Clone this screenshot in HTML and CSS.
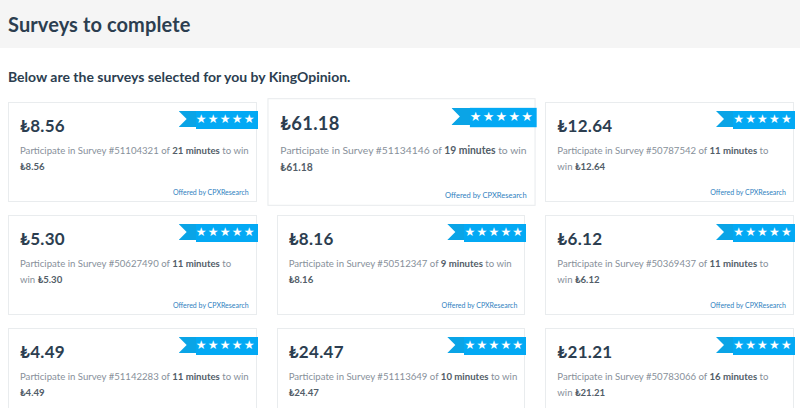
FILE: index.html
```html
<!DOCTYPE html>
<html>
<head>
<meta charset="utf-8">
<link rel="stylesheet" href="styles.css">
</head>
<body>
<header class="topbar"><h1 class="title">Surveys to complete</h1></header>
<main class="content">
  <p class="lead">Below are the surveys selected for you by KingOpinion.</p>
  <div class="grid">
    <div class="card">
      <div class="ribbon"><span class="tail"></span><span class="stars">★★★★★</span></div>
      <div class="price">₺8.56</div>
      <p class="desc">Participate in Survey #51104321 of <b>21 minutes</b> to win <b>₺8.56</b></p>
      <div class="offer">Offered by CPXResearch</div>
    </div>
    <div class="card card--hover">
      <div class="ribbon"><span class="tail"></span><span class="stars">★★★★★</span></div>
      <div class="price">₺61.18</div>
      <p class="desc">Participate in Survey #51134146 of <b>19 minutes</b> to win <b>₺61.18</b></p>
      <div class="offer">Offered by CPXResearch</div>
    </div>
    <div class="card">
      <div class="ribbon"><span class="tail"></span><span class="stars">★★★★★</span></div>
      <div class="price">₺12.64</div>
      <p class="desc">Participate in Survey #50787542 of <b>11 minutes</b> to<br>win <b>₺12.64</b></p>
      <div class="offer">Offered by CPXResearch</div>
    </div>
    <div class="card">
      <div class="ribbon"><span class="tail"></span><span class="stars">★★★★★</span></div>
      <div class="price">₺5.30</div>
      <p class="desc">Participate in Survey #50627490 of <b>11 minutes</b> to<br>win <b>₺5.30</b></p>
      <div class="offer">Offered by CPXResearch</div>
    </div>
    <div class="card">
      <div class="ribbon"><span class="tail"></span><span class="stars">★★★★★</span></div>
      <div class="price">₺8.16</div>
      <p class="desc">Participate in Survey #50512347 of <b>9 minutes</b> to win <b>₺8.16</b></p>
      <div class="offer">Offered by CPXResearch</div>
    </div>
    <div class="card">
      <div class="ribbon"><span class="tail"></span><span class="stars">★★★★★</span></div>
      <div class="price">₺6.12</div>
      <p class="desc">Participate in Survey #50369437 of <b>11 minutes</b> to<br>win <b>₺6.12</b></p>
      <div class="offer">Offered by CPXResearch</div>
    </div>
    <div class="card">
      <div class="ribbon"><span class="tail"></span><span class="stars">★★★★★</span></div>
      <div class="price">₺4.49</div>
      <p class="desc">Participate in Survey #51142283 of <b>11 minutes</b> to win <b>₺4.49</b></p>
      <div class="offer">Offered by CPXResearch</div>
    </div>
    <div class="card">
      <div class="ribbon"><span class="tail"></span><span class="stars">★★★★★</span></div>
      <div class="price">₺24.47</div>
      <p class="desc">Participate in Survey #51113649 of <b>10 minutes</b> to win <b>₺24.47</b></p>
      <div class="offer">Offered by CPXResearch</div>
    </div>
    <div class="card">
      <div class="ribbon"><span class="tail"></span><span class="stars">★★★★★</span></div>
      <div class="price">₺21.21</div>
      <p class="desc">Participate in Survey #50783066 of <b>16 minutes</b> to<br>win <b>₺21.21</b></p>
      <div class="offer">Offered by CPXResearch</div>
    </div>
  </div>
</main>
</body>
</html>
```

FILE: styles.css
```css
html, body {
  margin: 0;
  padding: 0;
  background: #ffffff;
  font-family: Lato, "Liberation Sans", sans-serif;
  color: #2a3a48;
  overflow: hidden;
}
.topbar {
  background: #f5f5f5;
  height: 48px;
  padding: 0 8px;
  display: flex;
  align-items: center;
}
.title {
  margin: 0;
  font-size: 20px;
  font-weight: 700;
  color: #2c3e50;
  letter-spacing: 0.1px;
}
.content {
  padding: 0 6px 0 8px;
}
.lead {
  margin: 0;
  padding-top: 19px;
  height: 35px;
  box-sizing: border-box;
  font-size: 14px;
  font-weight: 700;
  line-height: 20px;
  color: #2c3e50;
}
.grid {
  margin-top: 19px;
  display: grid;
  grid-template-columns: repeat(3, 1fr);
  column-gap: 20px;
  row-gap: 13px;
}
.card {
  position: relative;
  height: 100px;
  box-sizing: border-box;
  border: 1px solid #e9ecee;
  background: #fff;
  padding: 11px 5px 0 11px;
  display: flex;
  flex-direction: column;
}
.card--hover {
  transform: scale(1.077);
  z-index: 2;
}
.ribbon {
  position: absolute;
  top: 8px;
  right: -2px;
  width: 79px;
  height: 18px;
  display: flex;
  align-items: center;
  justify-content: flex-end;
}
.ribbon .tail {
  position: absolute;
  left: 0;
  top: 0;
  width: 20px;
  height: 16px;
  background: #0aa4e6;
  clip-path: polygon(0 0, 100% 0, 100% 100%, 0 100%, 8px 50%);
}
.ribbon .stars {
  position: relative;
  height: 18px;
  width: 62px;
  background: #03a9f4;
  color: #fff;
  font-family: "DejaVu Sans", sans-serif;
  font-size: 12px;
  line-height: 17px;
  letter-spacing: 1.2px;
  text-align: right;
  padding-right: 2px;
  box-sizing: border-box;
  white-space: nowrap;
  overflow: hidden;
}
.price {
  font-size: 17px;
  font-weight: 700;
  line-height: 24px;
  color: #2c3e50;
  letter-spacing: 0.3px;
}
.desc {
  margin: 5px 0 0;
  font-size: 9.6px;
  line-height: 16px;
  color: #87909a;
}
.desc b {
  font-weight: 700;
  color: #525d68;
}
.offer {
  margin-top: auto;
  margin-bottom: 5px;
  padding-right: 2px;
  text-align: right;
  font-size: 7px;
  color: #2f7fc0;
}
```
